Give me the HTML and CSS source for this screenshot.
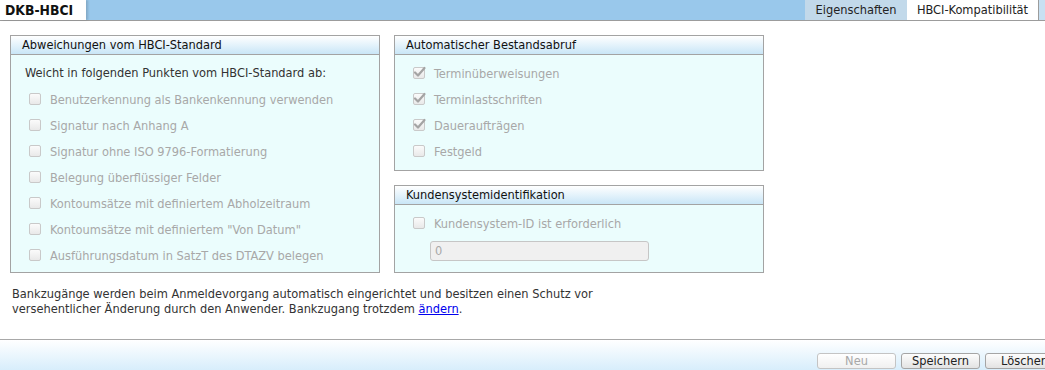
FILE: index.html
```html
<!DOCTYPE html>
<html lang="de">
<head>
    <meta charset="UTF-8">
    <title>DKB-HBCI</title>
    <link rel="stylesheet" href="styles.css">
</head>
<body>
    <div class="topbar">
        <div class="title-tab">DKB-HBCI</div>
        <div class="spacer"></div>
        <div class="tab">Eigenschaften</div>
        <div class="tab active">HBCI-Kompatibilität</div>
        <div class="edge"></div>
    </div>

    <div class="content">
        <div class="panel">
            <div class="panel-header">Abweichungen vom HBCI-Standard</div>
            <div class="panel-body">
                <div class="intro">Weicht in folgenden Punkten vom HBCI-Standard ab:</div>
                <label class="row"><span class="box"></span>Benutzerkennung als Bankenkennung verwenden</label>
                <label class="row"><span class="box"></span>Signatur nach Anhang A</label>
                <label class="row"><span class="box"></span>Signatur ohne ISO 9796-Formatierung</label>
                <label class="row"><span class="box"></span>Belegung überflüssiger Felder</label>
                <label class="row"><span class="box"></span>Kontoumsätze mit definiertem Abholzeitraum</label>
                <label class="row"><span class="box"></span>Kontoumsätze mit definiertem "Von Datum"</label>
                <label class="row"><span class="box"></span>Ausführungsdatum in SatzT des DTAZV belegen</label>
            </div>
        </div>

        <div class="column">
            <div class="panel">
                <div class="panel-header">Automatischer Bestandsabruf</div>
                <div class="panel-body">
                    <label class="row"><span class="box checked"><svg width="16" height="14" viewBox="0 0 16 14"><path d="M3 7.5 L6 10.5 L12.5 3" fill="none" stroke="#a4a4a4" stroke-width="2.2" stroke-linecap="round" stroke-linejoin="round"/></svg></span>Terminüberweisungen</label>
                    <label class="row"><span class="box checked"><svg width="16" height="14" viewBox="0 0 16 14"><path d="M3 7.5 L6 10.5 L12.5 3" fill="none" stroke="#a4a4a4" stroke-width="2.2" stroke-linecap="round" stroke-linejoin="round"/></svg></span>Terminlastschriften</label>
                    <label class="row"><span class="box checked"><svg width="16" height="14" viewBox="0 0 16 14"><path d="M3 7.5 L6 10.5 L12.5 3" fill="none" stroke="#a4a4a4" stroke-width="2.2" stroke-linecap="round" stroke-linejoin="round"/></svg></span>Daueraufträgen</label>
                    <label class="row"><span class="box"></span>Festgeld</label>
                </div>
            </div>

            <div class="panel grow">
                <div class="panel-header">Kundensystemidentifikation</div>
                <div class="panel-body">
                    <label class="row"><span class="box"></span>Kundensystem-ID ist erforderlich</label>
                    <div class="field">0</div>
                </div>
            </div>
        </div>
    </div>

    <p class="note">Bankzugänge werden beim Anmeldevorgang automatisch eingerichtet und besitzen einen Schutz vor
        versehentlicher Änderung durch den Anwender. Bankzugang trotzdem <a href="#">ändern</a>.</p>

    <div class="footer">
        <button disabled>Neu</button>
        <button>Speichern</button>
        <button>Löschen</button>
    </div>
</body>
</html>
```

FILE: styles.css
```css
body {
    margin: 0;
    font-family: 'DejaVu Sans Condensed', 'DejaVu Sans', sans-serif;
    font-size: 12.7px;
    color: #333;
    background-color: #fff;
    width: 1045px;
    height: 370px;
    overflow: hidden;
}

.topbar {
    display: flex;
    height: 20px;
    background-color: #99c8eb;
    border-bottom: 1px solid #9c9c9c;
}

.title-tab {
    width: 81px;
    padding-left: 5px;
    background-color: #fff;
    font-weight: bold;
    font-size: 13.8px;
    color: #111;
    line-height: 20px;
    box-shadow: 2px 0 2px rgba(0,0,0,0.15);
}

.spacer {
    flex: 1;
}

.tab {
    width: 102px;
    text-align: center;
    line-height: 20px;
    color: #222;
    background-color: #c2d9ea;
}

.tab.active {
    width: 131px;
    background-color: #fff;
    border-right: 1px solid #9c9c9c;
}

.edge {
    width: 6px;
    background-color: #c8e0f2;
}

.content {
    display: flex;
    gap: 14px;
    padding: 14px 10px 0;
}

.column {
    display: flex;
    flex-direction: column;
    gap: 14px;
    width: 370px;
}

.panel {
    width: 368px;
    border: 1px solid #a3a3a3;
    background-color: #ebfdfd;
    display: flex;
    flex-direction: column;
}

.content > .panel {
    height: 236px;
}

.panel.grow {
    flex: 1;
}

.panel-header {
    height: 18px;
    line-height: 18px;
    padding-left: 11px;
    color: #111;
    background: linear-gradient(to bottom, #ffffff, #c9e6f7);
    border-bottom: 1px solid #a3a3a3;
}

.panel-body {
    padding: 5px 0 6px 18px;
}

.intro {
    height: 26px;
    line-height: 26px;
    margin-left: -4px;
    color: #333;
}

.row {
    display: flex;
    align-items: center;
    height: 26px;
    color: #a8a8a8;
}

.box {
    position: relative;
    width: 10px;
    height: 10px;
    margin-right: 9px;
    border: 1px solid #c9c9c9;
    border-radius: 2px;
    background: linear-gradient(to bottom, #fbfbfb, #e9e9e9);
}

.box svg {
    position: absolute;
    left: -2px;
    top: -3px;
}

.field {
    width: 213px;
    height: 18px;
    line-height: 18px;
    margin: 5px 0 0 17px;
    padding-left: 4px;
    border: 1px solid #c6c6c6;
    border-radius: 3px;
    background-color: #f0f0f0;
    color: #a8a8a8;
}

.note {
    width: 600px;
    margin: 13px 0 0 12px;
    line-height: 15px;
    color: #333;
}

.note a {
    color: #0000ee;
}

.footer {
    margin-top: 23px;
    margin-right: -19px;
    height: 30px;
    border-top: 1px solid #a8a8a8;
    background: linear-gradient(to bottom, #ffffff, #c6e6fa);
    display: flex;
    justify-content: flex-end;
    align-items: flex-start;
    gap: 5px;
    padding-top: 13px;
}

.footer button {
    width: 79px;
    height: 16px;
    padding: 0;
    font-family: 'DejaVu Sans Condensed', 'DejaVu Sans', sans-serif;
    font-size: 12.7px;
    line-height: 14px;
    color: #222;
    border: 1px solid #a5a5a5;
    border-radius: 3px;
    background: linear-gradient(to bottom, #fdfdfd, #e3e3e3);
}

.footer button:disabled {
    color: #a8a8a8;
    border-color: #c4c4c4;
    background: linear-gradient(to bottom, #ffffff, #f0f0f0);
}
```
